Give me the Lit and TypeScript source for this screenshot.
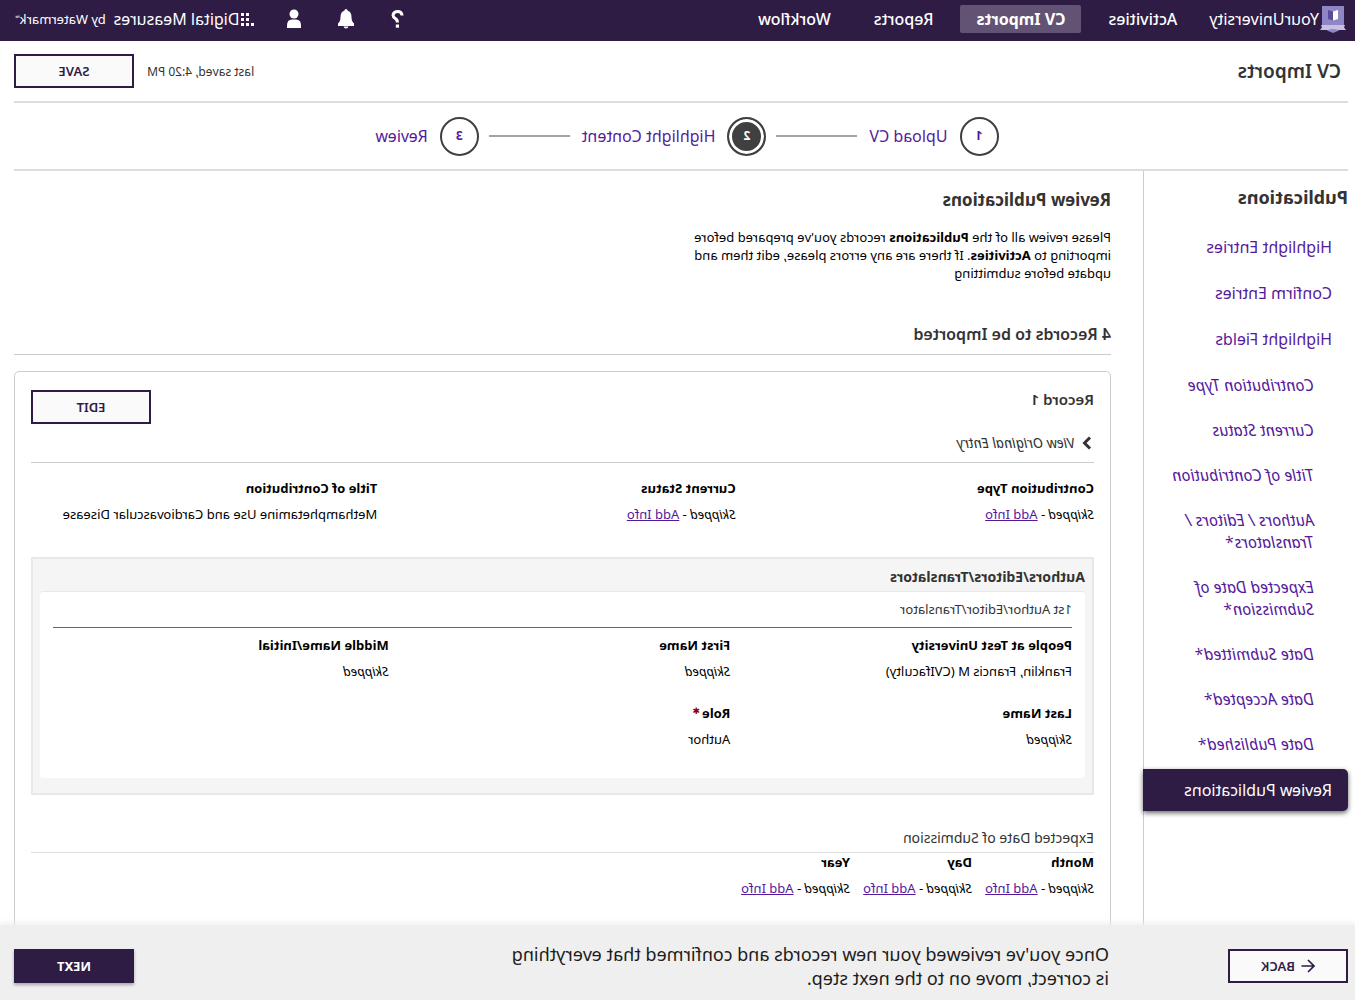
import { LitElement, html, css, svg, nothing } from "lit";
import { customElement } from "lit/decorators.js";

interface Field {
  label: string;
  value?: string;
  addInfo?: boolean;
  required?: boolean;
}

const NAV = ["Activities", "CV Imports", "Reports", "Workflow"];
const STEPS = ["Upload CV", "Highlight Content", "Review"];
const SIDE_MAIN = ["Highlight Entries", "Confirm Entries", "Highlight Fields"];
const SIDE_SUB = [
  "Contribution Type",
  "Current Status",
  "Title of Contribution",
  "Authors / Editors / Translators*",
  "Expected Date of Submission*",
  "Date Submitted*",
  "Date Accepted*",
  "Date Published*",
];
const RECORD: Field[] = [
  { label: "Contribution Type", addInfo: true },
  { label: "Current Status", addInfo: true },
  { label: "Title of Contribution", value: "Methamphetamine Use and Cardiovascular Disease" },
];
const AUTHOR: Field[] = [
  { label: "People at Test University", value: "Franklin, Francis M (CVIfaculty)" },
  { label: "First Name" },
  { label: "Middle Name/Initial" },
  { label: "Last Name" },
  { label: "Role", value: "Author", required: true },
];
const DATES: Field[] = [
  { label: "Month", addInfo: true },
  { label: "Day", addInfo: true },
  { label: "Year", addInfo: true },
];

@customElement("app-root")
export class AppRoot extends LitElement {
  static styles = css`
    :host {
      display: block;
      font-family: "Noto Sans", "Open Sans", sans-serif;
      font-size: 13px;
      line-height: 18px;
      color: #000;
    }
    * {
      box-sizing: border-box;
    }
    h1, h2, h3, h4, p, ul, ol, dl, dd {
      margin: 0;
      padding: 0;
    }
    ul, ol {
      list-style: none;
    }
    a {
      color: #551a9b;
    }
    /* The whole interface is shown as a mirror image. */
    .page {
      display: flex;
      flex-direction: column;
      height: 100vh;
      overflow: hidden;
      background: #fff;
      transform: scaleX(-1);
    }
    .top {
      display: flex;
      align-items: center;
      flex: none;
      height: 41px;
      padding: 0 15px 3px 9px;
      background: #2e1c45;
      color: #fff;
      font-size: 16px;
      line-height: 22px;
    }
    .top a {
      color: inherit;
      text-decoration: none;
    }
    .school {
      display: flex;
      align-items: center;
      gap: 1px;
      margin-right: 16px;
    }
    .nav {
      display: flex;
      gap: 11px;
      flex: 1;
      font-weight: 500;
    }
    .nav a {
      display: block;
      padding: 3px 16px;
      border-radius: 2px;
    }
    .nav .on {
      background: #625374;
      font-weight: 700;
    }
    .tools {
      display: flex;
      align-items: center;
      gap: 28px;
      margin-right: 28px;
    }
    .icon {
      display: flex;
      padding: 0;
      border: 0;
      background: none;
    }
    .brand {
      display: flex;
      align-items: center;
    }
    .brand svg {
      margin-right: 1px;
    }
    .by {
      margin-left: 8px;
      font-size: 13px;
    }
    .tm {
      align-self: flex-start;
      font-size: 6px;
      line-height: 20px;
    }
    .title {
      display: flex;
      align-items: center;
      flex: none;
      height: 62px;
      margin: 0 14px 0 7px;
      padding-left: 7px;
      border-bottom: 2px solid #ddd;
    }
    .title h1 {
      flex: 1;
      font-size: 19px;
      font-weight: 600;
      line-height: 26px;
      color: #333;
    }
    .saved {
      margin-right: 13px;
      padding-top: 1px;
      font-size: 12px;
      color: #333;
    }
    .btn {
      display: flex;
      align-items: center;
      justify-content: center;
      gap: 6px;
      flex: none;
      width: 120px;
      height: 34px;
      padding: 0;
      border: 2px solid #2e1c45;
      background: #fafafa;
      color: #2e1c45;
      font: 600 13px/18px "Noto Sans", sans-serif;
    }
    .btn.solid {
      background: #2e1c45;
      color: #fff;
      font-weight: 700;
      box-shadow: 0 2px 3px rgba(0, 0, 0, 0.3);
    }
    .steps {
      display: flex;
      align-items: center;
      justify-content: center;
      flex: none;
      height: 68px;
      margin: 0 14px 0 7px;
      border-bottom: 2px solid #ddd;
    }
    .step {
      display: flex;
      align-items: center;
      gap: 12px;
      padding-right: 12px;
      color: #551a9b;
      font-size: 16px;
      line-height: 22px;
      text-decoration: none;
    }
    .num {
      display: flex;
      align-items: center;
      justify-content: center;
      width: 39px;
      height: 39px;
      border: 2px solid #404040;
      border-radius: 50%;
      font-size: 12px;
      font-weight: 700;
    }
    .num.on {
      background: #404040;
      color: #fff;
      box-shadow: inset 0 0 0 3px #fff;
    }
    .rule {
      width: 81px;
      height: 2px;
      margin-right: 10px;
      background: #a3a3a3;
    }
    .body {
      display: flex;
      flex: 1;
      min-height: 0;
      overflow: hidden;
      padding: 0 14px 0 7px;
    }
    .side {
      flex: none;
      width: 205px;
      border-right: 1px solid #ccc;
    }
    .side h2 {
      margin: 14px 0 16px;
      font-size: 18px;
      font-weight: 700;
      line-height: 25px;
      color: #333;
    }
    .side ul {
      display: flex;
      flex-direction: column;
      gap: 4px;
      font-size: 16px;
      line-height: 22px;
    }
    .side .sub {
      gap: 3px;
      font-style: italic;
    }
    .side a {
      display: block;
      padding: 10px 16px;
      text-decoration: none;
    }
    .sub a {
      padding: 10px 16px 10px 34px;
    }
    .side .on {
      margin-right: -1px;
      border-radius: 5px 0 0 5px;
      background: #2e1c45;
      color: #fff;
      box-shadow: 0 2px 5px rgba(0, 0, 0, 0.6);
    }
    .main {
      flex: 1;
      min-width: 0;
      padding: 17px 0 0 32px;
    }
    .main h2 {
      font-size: 17px;
      font-weight: 700;
      line-height: 24px;
      color: #333;
    }
    .intro {
      max-width: 430px;
      margin: 16px 0 40px;
    }
    .main .count {
      padding-bottom: 8px;
      border-bottom: 1px solid #ccc;
      font-size: 16px;
      font-weight: 600;
    }
    .card {
      margin-top: 16px;
      padding: 18px 16px 40px;
      border: 1px solid #ccc;
      border-radius: 5px;
    }
    .head {
      display: flex;
      justify-content: space-between;
    }
    .head h3 {
      font-size: 15px;
      font-weight: 600;
      line-height: 18px;
      color: #333;
    }
    .view {
      display: flex;
      align-items: center;
      gap: 6px;
      width: 100%;
      margin-top: 9px;
      padding: 0 0 9px 2px;
      border: 0;
      border-bottom: 1px solid #ccc;
      background: none;
      color: #333;
      font: italic 14px/20px "Noto Sans", sans-serif;
    }
    .fields {
      display: grid;
      grid-template-columns: repeat(3, 1fr);
      gap: 24px 12px;
    }
    .record {
      padding-top: 16px;
    }
    .fields dt {
      font-weight: 700;
    }
    .fields dd {
      margin-top: 8px;
    }
    .req {
      margin-left: 2px;
      color: #8b0000;
      font-family: "DejaVu Sans", sans-serif;
      font-size: 9px;
      line-height: 9px;
      vertical-align: 4px;
    }
    .box {
      margin-top: 34px;
      padding: 8px 7px 15px;
      border: 2px solid #e8e8e8;
      background: #f5f5f5;
    }
    .box h3 {
      font-size: 14px;
      font-weight: 700;
      line-height: 20px;
      padding-bottom: 4px;
      color: #333;
    }
    .panel {
      padding: 8px 13px 30px;
      border-top: 1px solid #e8e8e8;
      border-radius: 3px;
      background: #fff;
    }
    .panel h4 {
      padding-bottom: 9px;
      border-bottom: 1px solid #666;
      font-size: 13px;
      font-weight: 400;
      color: #333;
    }
    .panel .fields {
      padding-top: 8px;
      column-gap: 6px;
    }
    .when {
      margin-top: 33px;
      padding-bottom: 4px;
      border-bottom: 1px solid #ddd;
      font-size: 14px;
      font-weight: 400;
      line-height: 20px;
      color: #333;
    }
    .fields.dates {
      grid-template-columns: repeat(3, minmax(112px, max-content));
      column-gap: 10px;
      justify-content: start;
    }
    .foot {
      position: relative;
      display: flex;
      align-items: center;
      flex: none;
      height: 75px;
      padding: 7px 14px 0 7px;
      background: #efefef;
      box-shadow: 0 -1px 6px 1px #efefef;
    }
    .msg {
      flex: 1;
      margin-left: 119px;
      font-size: 18px;
      line-height: 24px;
      color: #1c1c1c;
    }
    .msg span {
      display: block;
      max-width: 608px;
    }
  `;

  private field(f: Field) {
    return html`<div>
      <dt>${f.label}${f.required ? html`<span class="req">✱</span>` : nothing}</dt>
      <dd>${f.value ?? html`<em>Skipped</em>`}${f.addInfo ? html` - <a href="#">Add Info</a>` : nothing}</dd>
    </div>`;
  }

  private step(label: string, i: number) {
    return html`${i > 0 ? html`<span class="rule"></span>` : nothing}
      <a class="step" href="#"><span class="num ${i === 1 ? "on" : ""}">${i + 1}</span>${label}</a>`;
  }

  private dots() {
    const cells = [[5, 0], [10, 0], [5, 5], [10, 5], [0, 10], [5, 10], [10, 10]];
    return svg`${cells.map(([x, y]) => svg`<rect x=${x} y=${y} width="3" height="3" fill="#fff"/>`)}`;
  }

  render() {
    return html`<div class="page">
      <header class="top">
        <a class="school" href="#">
          <svg width="26" height="28" viewBox="0 0 26 28" aria-hidden="true">
            <path d="M2 1h22v19q0 4-11 8Q2 24 2 20z" fill="#8f86c5"/>
            <path d="M1 20h24l-1 2.500 2 2.500h-7l-6-1-6 1H0l2-2.500z" fill="#c9bfe0"/>
            <path d="M8 5l5 1.500v9L8 14z" fill="#fff"/>
            <path d="M18 5l-5 1.500v9l5-1.500z" fill="#5a4c9b"/>
          </svg>
          YourUniversity
        </a>
        <nav class="nav">
          ${NAV.map((n) => html`<a href="#" class=${n === "CV Imports" ? "on" : ""}>${n}</a>`)}
        </nav>
        <div class="tools">
          <button class="icon" aria-label="Help">
            <svg width="24" height="20" viewBox="0 0 24 20">
              <path d="M8 6.500V6Q8.500 2.500 12.300 2.500T17 6q0 2-2.300 3.500T12.600 13.500" fill="none" stroke="#fff" stroke-width="3"/>
              <rect x="11" y="15.500" width="3.200" height="3.200" fill="#fff"/>
            </svg>
          </button>
          <button class="icon" aria-label="Notifications">
            <svg width="24" height="20" viewBox="0 0 24 20">
              <path d="M12 0q1.500 0 1.500 1.600Q17.500 3 17.500 8q0 4.500 2.500 6.500V17H4v-2.500Q6.500 12.500 6.500 8q0-5 4-6.400Q10.500 0 12 0z" fill="#fff"/>
              <path d="M9.500 17.500h5q-.5 2-2.500 2t-2.500-2z" fill="#fff"/>
            </svg>
          </button>
          <button class="icon" aria-label="Account">
            <svg width="24" height="20" viewBox="0 0 24 20">
              <circle cx="12" cy="5" r="4.500" fill="#fff"/>
              <path d="M5 19v-2.500Q5 10.500 10 10.500h4q5 0 5 6V19z" fill="#fff"/>
            </svg>
          </button>
        </div>
        <a class="brand" href="#">
          <svg width="13" height="13" viewBox="0 0 13 13" aria-hidden="true">${this.dots()}</svg>
          Digital Measures <span class="by">by Watermark</span><span class="tm">™</span>
        </a>
      </header>

      <div class="title">
        <h1>CV Imports</h1>
        <span class="saved">last saved, 4:20 PM</span>
        <button class="btn">SAVE</button>
      </div>

      <nav class="steps">${STEPS.map((s, i) => this.step(s, i))}</nav>

      <div class="body">
        <aside class="side">
          <h2>Publications</h2>
          <ul>
            ${SIDE_MAIN.map((s) => html`<li><a href="#">${s}</a></li>`)}
            <li>
              <ul class="sub">${SIDE_SUB.map((s) => html`<li><a href="#">${s}</a></li>`)}</ul>
            </li>
            <li><a class="on" href="#">Review Publications</a></li>
          </ul>
        </aside>

        <main class="main">
          <h2>Review Publications</h2>
          <p class="intro">
            Please review all of the <strong>Publications</strong> records you've prepared before importing to
            <strong>Activities</strong>. If there are any errors please, edit them and update before submitting
          </p>
          <h2 class="count">4 Records to be Imported</h2>
          <section class="card">
            <div class="head">
              <h3>Record 1</h3>
              <button class="btn">EDIT</button>
            </div>
            <button class="view">
              <svg width="11" height="14" viewBox="0 0 11 14" aria-hidden="true">
                <path d="M2 1.500L7.500 7L2 12.500" fill="none" stroke="#333" stroke-width="3"/>
              </svg>
              View Original Entry
            </button>
            <dl class="fields record">${RECORD.map((f) => this.field(f))}</dl>
            <div class="box">
              <h3>Authors/Editors/Translators</h3>
              <div class="panel">
                <h4>1st Author/Editor/Translator</h4>
                <dl class="fields">${AUTHOR.map((f) => this.field(f))}</dl>
              </div>
            </div>
            <h4 class="when">Expected Date of Submission</h4>
            <dl class="fields dates">${DATES.map((f) => this.field(f))}</dl>
          </section>
        </main>
      </div>

      <footer class="foot">
        <button class="btn">
          <svg width="14" height="14" viewBox="0 0 14 14" aria-hidden="true">
            <path d="M13.500 7H1.500M7 1L1 7L7 13" fill="none" stroke="#2e1c45" stroke-width="1.700"/>
          </svg>
          BACK
        </button>
        <p class="msg">
          <span>Once you've reviewed your new records and confirmed that everything is correct, move on to the next step.</span>
        </p>
        <button class="btn solid">NEXT</button>
      </footer>
    </div>`;
  }
}
